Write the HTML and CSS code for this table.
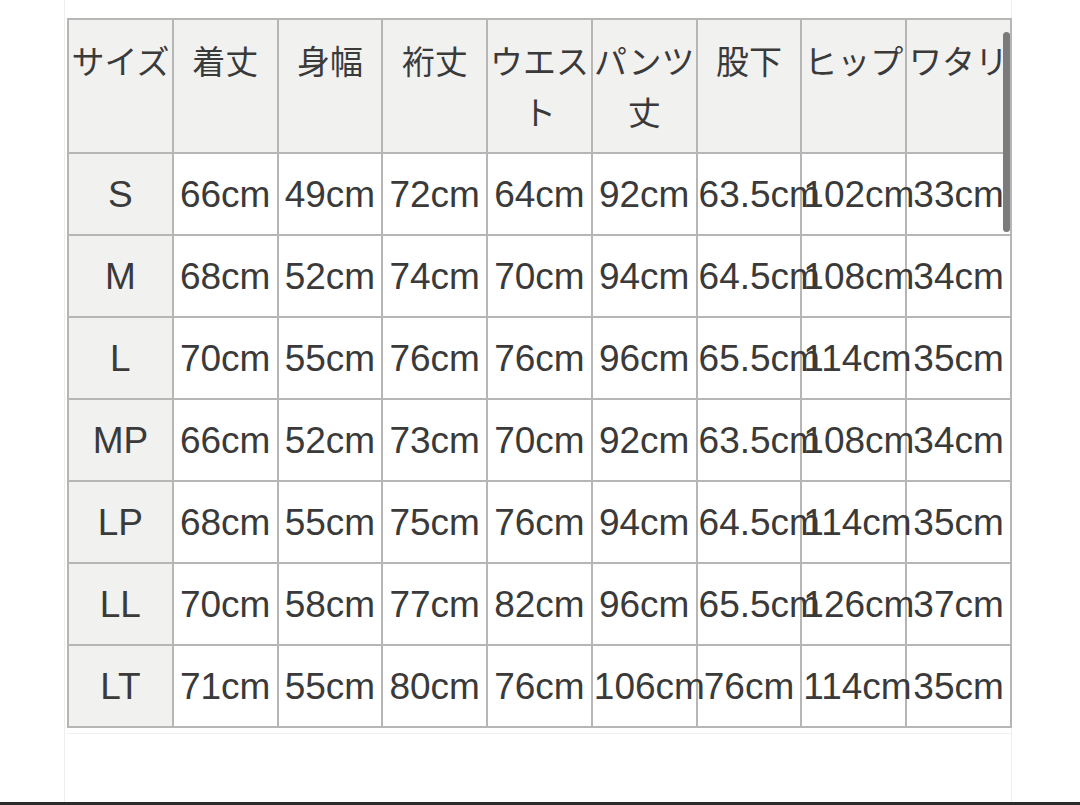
FILE: index.html
```html
<!DOCTYPE html>
<html lang="ja">
<head>
<meta charset="utf-8">
<title>サイズ表</title>
<link rel="stylesheet" href="styles.css">
</head>
<body>
<div class="page">
  <div class="frame">
    <div class="table-wrap">
      <table class="size-table">
        <thead>
          <tr>
            <th>サイズ</th>
            <th>着丈</th>
            <th>身幅</th>
            <th>裄丈</th>
            <th>ウエスト</th>
            <th>パンツ丈</th>
            <th>股下</th>
            <th>ヒップ</th>
            <th>ワタリ</th>
          </tr>
        </thead>
        <tbody>
          <tr><td class="size">S</td><td>66cm</td><td>49cm</td><td>72cm</td><td>64cm</td><td>92cm</td><td>63.5cm</td><td>102cm</td><td>33cm</td></tr>
          <tr><td class="size">M</td><td>68cm</td><td>52cm</td><td>74cm</td><td>70cm</td><td>94cm</td><td>64.5cm</td><td>108cm</td><td>34cm</td></tr>
          <tr><td class="size">L</td><td>70cm</td><td>55cm</td><td>76cm</td><td>76cm</td><td>96cm</td><td>65.5cm</td><td>114cm</td><td>35cm</td></tr>
          <tr><td class="size">MP</td><td>66cm</td><td>52cm</td><td>73cm</td><td>70cm</td><td>92cm</td><td>63.5cm</td><td>108cm</td><td>34cm</td></tr>
          <tr><td class="size">LP</td><td>68cm</td><td>55cm</td><td>75cm</td><td>76cm</td><td>94cm</td><td>64.5cm</td><td>114cm</td><td>35cm</td></tr>
          <tr><td class="size">LL</td><td>70cm</td><td>58cm</td><td>77cm</td><td>82cm</td><td>96cm</td><td>65.5cm</td><td>126cm</td><td>37cm</td></tr>
          <tr><td class="size">LT</td><td>71cm</td><td>55cm</td><td>80cm</td><td>76cm</td><td>106cm</td><td>76cm</td><td>114cm</td><td>35cm</td></tr>
        </tbody>
      </table>
      <div class="scroll-thumb"></div>
    </div>
  </div>
  <div class="bottom-bar"></div>
</div>
</body>
</html>
```

FILE: styles.css
```css
html, body {
  margin: 0;
  padding: 0;
  background: #ffffff;
}

.page {
  width: 1080px;
  height: 805px;
  display: flex;
  flex-direction: column;
  overflow: hidden;
}

.frame {
  flex: 1;
  margin-left: 64px;
  width: 948px;
  border-left: 1px solid #ededed;
  border-right: 1px solid #ededed;
  padding-top: 18px;
  padding-left: 2px;
  box-sizing: border-box;
}

.table-wrap {
  position: relative;
  width: 945px;
  padding-bottom: 5px;
  border-bottom: 1px solid #f1f1f1;
}

.size-table {
  border-collapse: collapse;
  table-layout: fixed;
  width: 945px;
  color: #3a3a3a;
  font-family: "Liberation Sans", "Noto Sans CJK JP", Arial, sans-serif;
}

.size-table th,
.size-table td {
  border: 2px solid #b6b6b6;
  text-align: center;
  white-space: nowrap;
}

.size-table th {
  background: #f1f1f0;
  font-family: "Noto Sans CJK JP", sans-serif;
  font-weight: 400;
  font-size: 33px;
  line-height: 51px;
  white-space: normal;
  vertical-align: top;
  height: 102px;
  padding: 15px 1px 15px;
  word-break: break-all;
}

.size-table td {
  height: 78px;
  padding: 2px 1px 0;
  font-size: 37px;
  line-height: 40px;
  vertical-align: middle;
  background: #ffffff;
}

.size-table td.size {
  background: #f1f1f0;
}

.scroll-thumb {
  position: absolute;
  top: 14px;
  right: 2px;
  width: 7px;
  height: 200px;
  border-radius: 4px;
  background: #7b7b7b;
}

.bottom-bar {
  height: 3px;
  background: #2b2b2b;
}
```
